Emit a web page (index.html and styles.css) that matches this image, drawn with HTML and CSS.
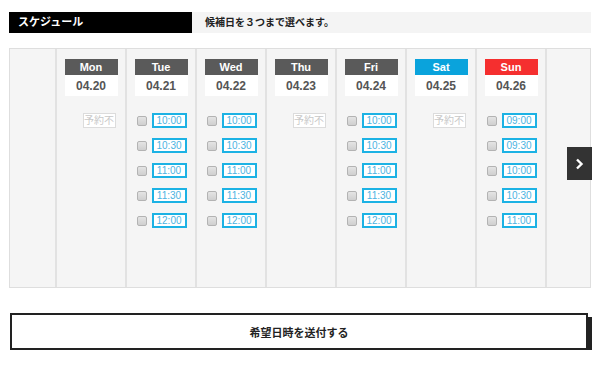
FILE: index.html
```html
<!DOCTYPE html>
<html lang="ja">
<head>
  <meta charset="UTF-8" />
  <title>スケジュール</title>
  <link rel="stylesheet" href="styles.css">
</head>
<body>
  <div class="wrap">
    <div class="head">
      <div class="head-title">スケジュール</div>
      <div class="head-note">候補日を３つまで選べます。</div>
    </div>

    <div class="calendar">
      <div class="col-blank"></div>

      <div class="day">
        <div class="dname">Mon</div>
        <div class="ddate">04.20</div>
        <div class="slots">
          <div class="slot"><span class="closed">予約不</span></div>
        </div>
      </div>

      <div class="day">
        <div class="dname">Tue</div>
        <div class="ddate">04.21</div>
        <div class="slots">
          <label class="slot"><span class="chk"></span><span class="time">10:00</span></label>
          <label class="slot"><span class="chk"></span><span class="time">10:30</span></label>
          <label class="slot"><span class="chk"></span><span class="time">11:00</span></label>
          <label class="slot"><span class="chk"></span><span class="time">11:30</span></label>
          <label class="slot"><span class="chk"></span><span class="time">12:00</span></label>
        </div>
      </div>

      <div class="day">
        <div class="dname">Wed</div>
        <div class="ddate">04.22</div>
        <div class="slots">
          <label class="slot"><span class="chk"></span><span class="time">10:00</span></label>
          <label class="slot"><span class="chk"></span><span class="time">10:30</span></label>
          <label class="slot"><span class="chk"></span><span class="time">11:00</span></label>
          <label class="slot"><span class="chk"></span><span class="time">11:30</span></label>
          <label class="slot"><span class="chk"></span><span class="time">12:00</span></label>
        </div>
      </div>

      <div class="day">
        <div class="dname">Thu</div>
        <div class="ddate">04.23</div>
        <div class="slots">
          <div class="slot"><span class="closed">予約不</span></div>
        </div>
      </div>

      <div class="day">
        <div class="dname">Fri</div>
        <div class="ddate">04.24</div>
        <div class="slots">
          <label class="slot"><span class="chk"></span><span class="time">10:00</span></label>
          <label class="slot"><span class="chk"></span><span class="time">10:30</span></label>
          <label class="slot"><span class="chk"></span><span class="time">11:00</span></label>
          <label class="slot"><span class="chk"></span><span class="time">11:30</span></label>
          <label class="slot"><span class="chk"></span><span class="time">12:00</span></label>
        </div>
      </div>

      <div class="day">
        <div class="dname sat">Sat</div>
        <div class="ddate">04.25</div>
        <div class="slots">
          <div class="slot"><span class="closed">予約不</span></div>
        </div>
      </div>

      <div class="day">
        <div class="dname sun">Sun</div>
        <div class="ddate">04.26</div>
        <div class="slots">
          <label class="slot"><span class="chk"></span><span class="time">09:00</span></label>
          <label class="slot"><span class="chk"></span><span class="time">09:30</span></label>
          <label class="slot"><span class="chk"></span><span class="time">10:00</span></label>
          <label class="slot"><span class="chk"></span><span class="time">10:30</span></label>
          <label class="slot"><span class="chk"></span><span class="time">11:00</span></label>
        </div>
      </div>

      <div class="col-rest"></div>

      <button class="next" type="button" aria-label="次へ">
        <svg width="9" height="12" viewBox="0 0 9 12"><path d="M2 1.5 L6.5 6 L2 10.5" fill="none" stroke="#fff" stroke-width="2.4"/></svg>
      </button>
    </div>

    <button class="submit" type="button">希望日時を送付する</button>
  </div>
</body>
</html>
```

FILE: styles.css
```css
* { box-sizing: border-box; }
body {
  margin: 0;
  font-family: 'Liberation Sans', Arial, 'Noto Sans CJK JP', sans-serif;
  background: #ffffff;
  color: #333;
}
.wrap {
  padding: 12px 9px 0 9px;
}
.head {
  display: flex;
  height: 21px;
}
.head-title {
  width: 183px;
  background: #000;
  color: #fff;
  font-size: 11px;
  font-weight: bold;
  line-height: 21px;
  padding-left: 9px;
}
.head-note {
  flex: 1;
  background: #f4f4f4;
  color: #222;
  font-size: 10px;
  font-weight: bold;
  line-height: 21px;
  padding-left: 13px;
}
.calendar {
  position: relative;
  display: flex;
  margin-top: 15px;
  height: 240px;
  border: 1px solid #dedede;
  background: #f5f5f5;
}
.col-blank {
  width: 45px;
}
.day {
  width: 70px;
  border-left: 2px solid #e2e2e2;
  padding-top: 10px;
}
.col-rest {
  flex: 1;
  border-left: 2px solid #e2e2e2;
}
.dname,
.ddate {
  width: 53px;
  margin: 0 auto;
  text-align: center;
  font-weight: bold;
}
.dname {
  height: 16px;
  line-height: 16px;
  background: #5a5a5a;
  color: #fff;
  font-size: 11px;
}
.dname.sat { background: #0aa3dc; }
.dname.sun { background: #f52f2f; }
.ddate {
  height: 21px;
  line-height: 22px;
  background: #fff;
  color: #555;
  font-size: 12px;
}
.slots {
  width: 51px;
  margin: 17px auto 0;
}
.slot {
  display: flex;
  justify-content: flex-end;
  align-items: center;
  gap: 5px;
  height: 15px;
  margin-bottom: 10px;
}
.chk {
  width: 10px;
  height: 10px;
  border: 1px solid #b3b3b3;
  border-radius: 2px;
  background: linear-gradient(#e4e4e4, #cfcfcf);
}
.time {
  width: 35px;
  height: 15px;
  border: 2px solid #1cb2e4;
  background: #fff;
  color: #4bb3e2;
  font-size: 10px;
  line-height: 11px;
  text-align: center;
}
.closed {
  width: 33px;
  height: 15px;
  border: 1px solid #dcdcdc;
  background: #fff;
  color: #c8c8c8;
  font-size: 10px;
  line-height: 13px;
  text-align: center;
  margin-right: 1px;
}
.next {
  position: absolute;
  right: -2px;
  top: 98px;
  width: 25px;
  height: 33px;
  border: none;
  padding: 0;
  background: #333;
  display: flex;
  align-items: center;
  justify-content: center;
  cursor: pointer;
}
.submit {
  display: block;
  width: 578px;
  height: 37px;
  margin: 25px 0 0 1px;
  border: 2px solid #222;
  background: #fff;
  box-shadow: 4px 4px 0 #222;
  font-family: 'Liberation Sans', Arial, 'Noto Sans CJK JP', sans-serif;
  font-size: 11px;
  font-weight: bold;
  color: #222;
  cursor: pointer;
}
```
